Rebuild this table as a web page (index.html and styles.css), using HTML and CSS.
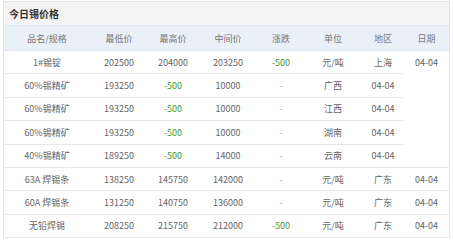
FILE: index.html
```html
<!DOCTYPE html>
<html lang="zh-CN">
<head>
<meta charset="utf-8">
<title>今日锡价格</title>
<link rel="stylesheet" href="styles.css">
</head>
<body>
<div class="panel">
  <div class="panel-title">今日锡价格</div>
  <table class="price-table">
    <colgroup>
      <col class="c1"><col class="c2"><col class="c3"><col class="c4">
      <col class="c5"><col class="c6"><col class="c7"><col class="c8">
    </colgroup>
    <thead>
      <tr><th>品名/规格</th><th>最低价</th><th>最高价</th><th>中间价</th><th>涨跌</th><th>单位</th><th>地区</th><th>日期</th></tr>
    </thead>
    <tbody>
      <tr><td>1#锡锭</td><td>202500</td><td>204000</td><td>203250</td><td class="down">-500</td><td>元/吨</td><td>上海</td><td>04-04</td></tr>
      <tr><td>60%锡精矿</td><td>193250</td><td class="down">-500</td><td>10000</td><td class="flat">-</td><td>广西</td><td>04-04</td></tr>
      <tr><td>60%锡精矿</td><td>193250</td><td class="down">-500</td><td>10000</td><td class="flat">-</td><td>江西</td><td>04-04</td></tr>
      <tr><td>60%锡精矿</td><td>193250</td><td class="down">-500</td><td>10000</td><td class="flat">-</td><td>湖南</td><td>04-04</td></tr>
      <tr><td>40%锡精矿</td><td>189250</td><td class="down">-500</td><td>14000</td><td class="flat">-</td><td>云南</td><td>04-04</td></tr>
      <tr><td>63A 焊锡条</td><td>138250</td><td>145750</td><td>142000</td><td class="flat">-</td><td>元/吨</td><td>广东</td><td>04-04</td></tr>
      <tr><td>60A 焊锡条</td><td>131250</td><td>140750</td><td>136000</td><td class="flat">-</td><td>元/吨</td><td>广东</td><td>04-04</td></tr>
      <tr class="last"><td>无铅焊锡</td><td>208250</td><td>215750</td><td>212000</td><td class="down">-500</td><td>元/吨</td><td>广东</td><td>04-04</td></tr>
    </tbody>
  </table>
</div>
</body>
</html>
```

FILE: styles.css
```css
html, body {
  margin: 0;
  padding: 0;
  background: #ffffff;
}

body {
  font-family: "Noto Sans CJK SC", "Noto Sans", sans-serif;
  color: #666666;
}

.panel {
  margin: 1px 3px 0 3px;
  border: 1px solid #e4e4e4;
  border-bottom: none;
}

.panel-title {
  height: 23px;
  line-height: 23px;
  padding-left: 5px;
  background: #f4f4f4;
  font-size: 10px;
  font-weight: bold;
  color: #333333;
}

.price-table {
  width: 100%;
  table-layout: fixed;
  border-collapse: separate;
  border-spacing: 0;
  font-size: 9px;
}

.c1 { width: 86px; }
.c2 { width: 58px; }
.c3 { width: 50px; }
.c4 { width: 60px; }
.c5 { width: 46px; }
.c6 { width: 58px; }
.c7 { width: 42px; }
.c8 { width: 45px; }

.price-table th {
  height: 24px;
  padding: 0;
  font-weight: normal;
  background: #e9f0f8;
  border-top: 1px solid #e2e8f0;
  color: #777777;
  text-align: center;
}

.price-table td {
  height: 22.4px;
  padding: 0;
  border-top: 1px solid #e8e8e8;
  text-align: center;
  color: #666666;
  white-space: nowrap;
}

.price-table tr.last td {
  border-bottom: 1px solid #e8e8e8;
}

.price-table td.down {
  color: #3f9a35;
}

.price-table td.flat {
  color: #aaaaaa;
}
```
